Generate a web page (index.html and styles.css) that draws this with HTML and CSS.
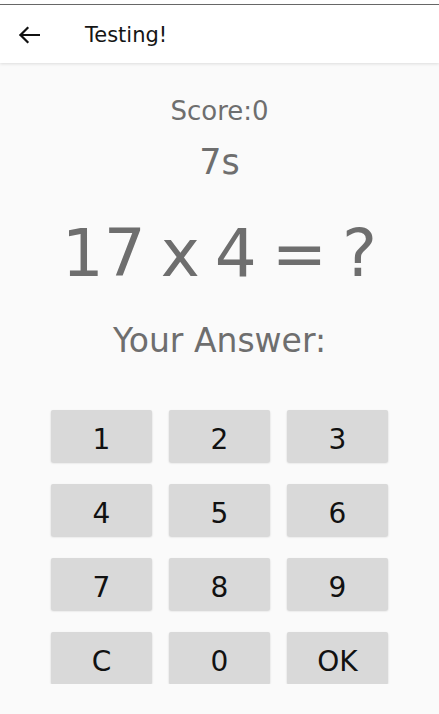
FILE: index.html
```html
<!DOCTYPE html>
<html>
<head>
<meta charset="utf-8">
<link rel="stylesheet" href="styles.css">
</head>
<body>
<div class="status"></div>
<header class="appbar">
  <svg class="back" width="22" height="18" viewBox="0 0 22 18" aria-hidden="true">
    <path d="M21 9H2.5M9.5 2L2.5 9l7 7" fill="none" stroke="#111" stroke-width="2.2" stroke-linecap="square" stroke-linejoin="miter"/>
  </svg>
  <h1 class="title">Testing!</h1>
</header>
<main class="content">
  <div class="score">Score:0</div>
  <div class="timer">7s</div>
  <div class="question">17 x 4 = ?</div>
  <div class="prompt">Your Answer:</div>
  <div class="pad">
    <button class="key">1</button>
    <button class="key">2</button>
    <button class="key">3</button>
    <button class="key">4</button>
    <button class="key">5</button>
    <button class="key">6</button>
    <button class="key">7</button>
    <button class="key">8</button>
    <button class="key">9</button>
    <button class="key">C</button>
    <button class="key">0</button>
    <button class="key">OK</button>
  </div>
</main>
</body>
</html>
```
FILE: styles.css
```css
html, body {
  margin: 0;
  padding: 0;
  background: #fafafa;
  font-family: "DejaVu Sans", "Liberation Sans", sans-serif;
}
.status {
  height: 4px;
  background: #ffffff;
  border-bottom: 1px solid #6a6a6a;
}
.appbar {
  height: 58px;
  background: #ffffff;
  display: flex;
  align-items: center;
  box-shadow: 0 1px 3px rgba(0,0,0,0.12);
  position: relative;
}
.back {
  margin-left: 18px;
  margin-top: 2px;
}
.title {
  margin: 0 0 0 45px;
  font-size: 21px;
  font-weight: normal;
  color: #151515;
  line-height: 1;
  padding-top: 2px;
}
.content {
  display: flex;
  flex-direction: column;
  align-items: center;
  color: #6e6e6e;
}
.score {
  margin-top: 33px;
  font-size: 26px;
  line-height: 30px;
}
.timer {
  margin-top: 16px;
  font-size: 35px;
  line-height: 40px;
}
.question {
  margin-top: 34px;
  font-size: 66px;
  line-height: 76px;
  word-spacing: -6px;
}
.prompt {
  margin-top: 30px;
  font-size: 33px;
  line-height: 38px;
}
.pad {
  margin-top: 50px;
  display: grid;
  grid-template-columns: repeat(3, 101px);
  grid-auto-rows: 52px;
  column-gap: 17px;
  row-gap: 22px;
}
.key {
  border: none;
  margin: 0;
  padding: 0;
  background: #d9d9d9;
  border-radius: 2px;
  box-shadow: 0 1px 2px rgba(0,0,0,0.18);
  font-family: "DejaVu Sans", "Liberation Sans", sans-serif;
  font-size: 28px;
  color: #111111;
  line-height: 52px;
  padding-top: 4px;
}
```
